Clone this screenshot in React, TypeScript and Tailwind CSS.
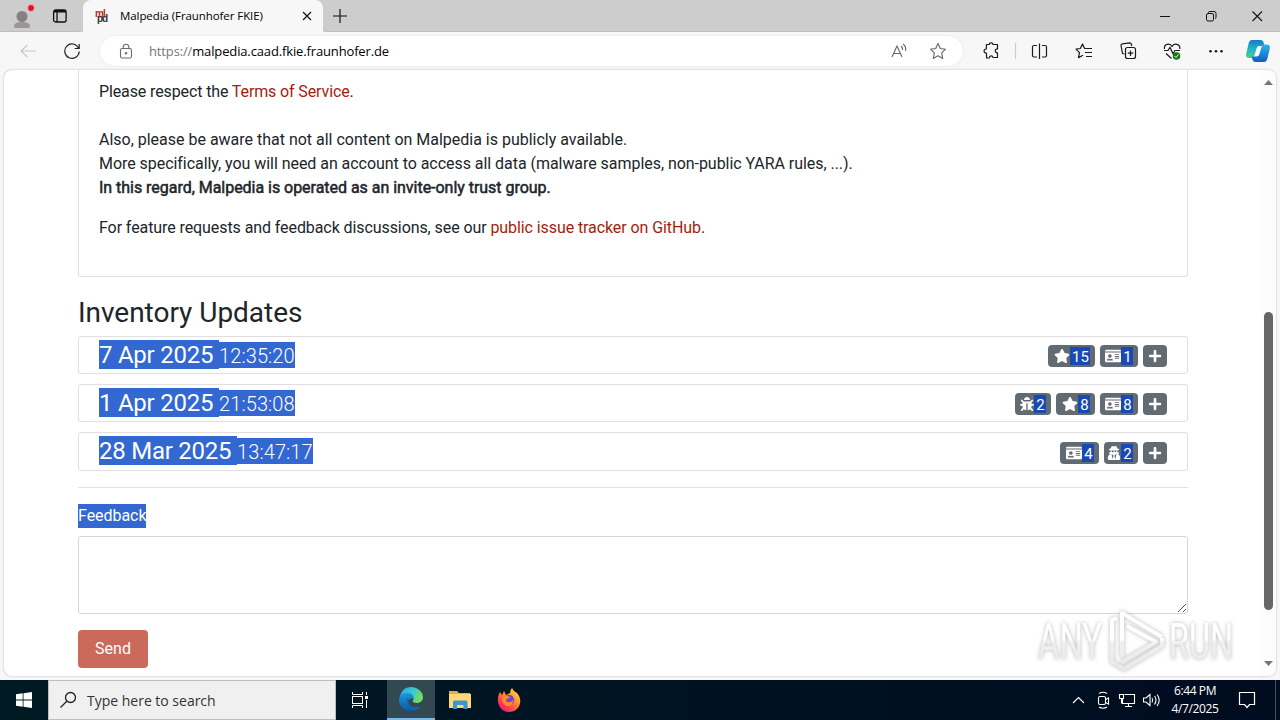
import React from "react";
import { FaBug, FaIdCard, FaPlus, FaStar, FaUserSecret } from "react-icons/fa";

type Badge = { icon: "star" | "card" | "bug" | "actor"; count: number; className: string };
type Update = { date: string; time: string; rowClass: string; dateClass: string; badgesClass: string; badges: Badge[] };

const badgeIcons = {
    star: <FaStar className="size-4" />,
    card: <FaIdCard className="size-4" />,
    bug: <FaBug className="size-3.5" />,
    actor: <FaUserSecret className="size-3.5" />,
};

const updates: Update[] = [
    {
        date: "7 Apr 2025",
        time: "12:35:20",
        rowClass: "h-[38px]",
        dateClass: "w-[120px]",
        badgesClass: "mt-2",
        badges: [
            { icon: "star", count: 15, className: "w-[47px]" },
            { icon: "card", count: 1, className: "w-[38px]" },
        ],
    },
    {
        date: "1 Apr 2025",
        time: "21:53:08",
        rowClass: "h-[38px]",
        dateClass: "w-[120px]",
        badgesClass: "mt-2",
        badges: [
            { icon: "bug", count: 2, className: "w-9" },
            { icon: "star", count: 8, className: "w-[39px]" },
            { icon: "card", count: 8, className: "w-[38px]" },
        ],
    },
    {
        date: "28 Mar 2025",
        time: "13:47:17",
        rowClass: "h-[39px]",
        dateClass: "w-[138px]",
        badgesClass: "mt-[9px]",
        badges: [
            { icon: "card", count: 4, className: "w-[39px]" },
            { icon: "actor", count: 2, className: "w-[34px]" },
        ],
    },
];

const TabStrip = () => (
    <div className="flex h-8 bg-[#cdcdcd]">
        <div className="flex w-[83px] items-center rounded-br-md border-b border-[#bdbdbd] pl-3">
            <svg className="h-6 w-6" viewBox="0 0 24 24">
                <circle cx="10" cy="12.500" r="5.500" fill="#858181" />
                <path d="M2 23c0-4 3-5 8-5s8 1 8 5c-2 3-14 3-16 0z" fill="#9b9797" />
                <circle cx="19" cy="4" r="3.400" fill="#e81123" stroke="#ddd" strokeWidth="0.6" />
            </svg>
            <svg className="ml-4 h-4 w-4" viewBox="0 0 16 16" fill="none" stroke="#111">
                <rect x="1.600" y="2" width="12.500" height="12" rx="2" strokeWidth="1.300" />
                <path d="M2 3.800h12M5 4v10" strokeWidth="1.300" />
                <path d="M2 3h12" strokeWidth="2" />
            </svg>
        </div>
        <div className="flex w-[240px] items-center rounded-t-lg bg-[#f7f7f7] pl-3">
            <div className="flex w-[14px] flex-col font-['Liberation_Sans'] text-[10px] leading-[5.500px] font-bold tracking-[-1px]">
                <span className="text-[#c0271d]">ml</span>
                <span className="pl-[2px] text-[#333]">pd</span>
            </div>
            <span className="ml-[11px] w-[180px] font-['Open_Sans'] text-[11.5px] tracking-[-0.08px] whitespace-nowrap text-black">
                Malpedia (Fraunhofer FKIE)
            </span>
            <svg className="ml-px size-3" viewBox="0 0 12 12" stroke="#111" strokeWidth="1.200">
                <path d="M2 2l8 8M10 2l-8 8" />
            </svg>
        </div>
        <div className="flex flex-1 items-center rounded-bl-md border-b border-[#bdbdbd] pl-[9px]">
            <svg className="size-4" viewBox="0 0 16 16" stroke="#111" strokeWidth="1.200">
                <path d="M8 1v14M1 8h14" />
            </svg>
            <svg className="mr-[5px] ml-auto h-4 w-[115px]" viewBox="0 0 115 16" fill="none" stroke="#111">
                <path d="M0 8.500h10" />
                <rect x="46.500" y="5.500" width="7" height="7.500" rx="1.500" />
                <path d="M48.500 5.500V4.500q0-1 1-1h4.500q2 0 2 2v4q0 1-1 1" />
                <path d="M92.500 3.500l9.500 9.500M102 3.500l-9.500 9.500" strokeWidth="1.100" />
            </svg>
        </div>
    </div>
);

const Toolbar = () => (
    <div className="flex h-[38px] items-center bg-[#f7f7f7]">
        <svg className="ml-5 h-4 w-4" viewBox="0 0 16 16" fill="none" stroke="#c8c8c8" strokeWidth="1.200">
            <path d="M16 8H1M7.500 2L1 8l6.500 6" />
        </svg>
        <svg className="ml-7 h-4 w-4" viewBox="0 0 16 16" fill="none" stroke="#222" strokeWidth="1.200">
            <path d="M14.500 5A7.200 7.200 0 1 0 15.200 8.500M15.200 1v4.500h-4.500" />
        </svg>
        <div className="ml-5 flex h-[30px] w-[863px] items-center rounded-full bg-white shadow-[0_0_2px_#ddd]">
            <svg className="ml-[19px] h-4 w-[14px]" viewBox="0 0 14 16" fill="none" stroke="#6b6b6b" strokeWidth="1.100">
                <rect x="1.500" y="5.500" width="11" height="9.500" rx="1.800" />
                <path d="M4.200 5.500V4a2.800 2.800 0 0 1 5.600 0v1.500" />
                <circle cx="7" cy="10.300" r=".7" fill="#6b6b6b" />
            </svg>
            <span className="mt-px ml-4 font-['Open_Sans'] text-[13px] tracking-[-0.14px] whitespace-nowrap text-[#777]">
                https://<span className="text-black">malpedia.caad.fkie.fraunhofer.de</span>
            </span>
            <svg className="ml-auto h-[18px] w-[18px]" viewBox="0 0 18 18" fill="none" stroke="#666" strokeWidth="1.100">
                <path d="M2 15L7 4l5 11M3.800 11.500h6.500M11 4q2 1.500 1.500 4M13 2q3.500 2.500 2.500 7" />
            </svg>
            <svg className="mr-4 ml-[21px] h-[18px] w-[18px]" viewBox="0 0 18 18" fill="none" stroke="#666" strokeWidth="1.100" strokeLinejoin="round">
                <path d="M9 1.500l2.300 5 5.200.7-3.800 3.700 1 5.500L9 13.700l-4.700 2.700 1-5.500L1.500 7.200l5.200-.7z" />
            </svg>
        </div>
        <svg className="h-[30px] flex-1" viewBox="963 36 317 30" fill="none" stroke="#1b1b1b" strokeWidth="1.200" strokeLinejoin="round">
            <path d="M986.500 44.500h2.700c0-2.300 3.800-2.300 3.800 0h4.500v4.500c-3-.4-3 4 0 3.800v4.700h-4.500c-.3-2.200-3.500-2.200-3.800.5h-2.700v-5c-3.200.3-3.200-4-.2-4z" />
            <path d="M1015.500 43v16" stroke="#ccc" />
            <path d="M1037 45.500h-3q-1.500 0-1.500 1.500v8.500q0 1.500 1.500 1.500h3M1042 45.500h3q1.500 0 1.500 1.500v8.500q0 1.500-1.500 1.500h-3M1039.500 43.500v15.500" />
            <path d="M1086 48.500l-1.500-.2-2-4.300-2.200 4.500-4.300.6 3.500 3.500-1 5 4.500-2.300M1086 48.500h6M1085 52.500h7M1086 56.500h6" />
            <path d="M1124.500 54l-2-.5-1.500-8q0-1.500 1.500-1.700l7-1q1.500 0 1.800 1.200l.5 2" />
            <rect x="1125.500" y="47.500" width="10" height="11" rx="2" />
            <path d="M1130.500 50.500v5.500M1127.800 53.200h5.500" />
            <path d="M1164.500 49c-1-5 5.500-6.500 7.500-2.500 2-4 8.500-2.500 7.800 2.500M1164 50.500h4l2-3.200 3 6.500 2-3.300h5M1166 53.500l5.500 5" />
            <circle cx="1176.500" cy="56" r="3.800" fill="#107c10" stroke="none" />
            <path d="M1174.500 56l1.500 1.500 2.500-3" stroke="#fff" strokeWidth=".9" />
            <g fill="#1b1b1b" stroke="none">
                <circle cx="1210.500" cy="51.200" r="1.300" />
                <circle cx="1216" cy="51.200" r="1.300" />
                <circle cx="1221.500" cy="51.200" r="1.300" />
            </g>
            <defs>
                <linearGradient id="copilotA" x1="0" y1="0" x2="0" y2="1">
                    <stop offset="0" stopColor="#1679c9" />
                    <stop offset=".5" stopColor="#20b5c8" />
                    <stop offset="1" stopColor="#55c98b" />
                </linearGradient>
                <linearGradient id="copilotB" x1="0" y1="0" x2="0" y2="1">
                    <stop offset="0" stopColor="#2cb8e6" />
                    <stop offset="1" stopColor="#1458c7" />
                </linearGradient>
            </defs>
            <g stroke="none">
                <path d="M1252 40h8.500q2.500 0 3.200 3l.8 3h-5q-2 0-2.700 2l-2.300 7.500q-.8 2.500-3 2.500h-2q-4.500 0-3.200-4.500l2.200-9.500q.8-4 3.500-4z" fill="url(#copilotA)" />
                <path d="M1264 62h-8.500q-2.500 0-3.200-3l-.8-2.500h5q2 0 2.700-2l2.300-7.500q.8-2.500 3-2.500h2q4.500 0 3.200 4.500l-2.200 9q-.8 4-3.500 4z" fill="url(#copilotB)" />
                <path d="M1257.500 46.500h4l-3 9h-4z" fill="#f2f9fb" />
            </g>
        </svg>
    </div>
);

const BadgeItem = ({ icon, count, className }: Badge) => (
    <div className={"flex h-[22px] items-center justify-end rounded bg-[#636b72] pr-[5px] text-white " + className}>
        {badgeIcons[icon]}
        <span className={"h-[18px] bg-[#1b49b3] pl-px text-center text-[15px] leading-[20px] " + (count > 9 ? "w-5" : "w-3")}>{count}</span>
    </div>
);

const UpdateRow = ({ date, time, rowClass, dateClass, badgesClass, badges }: Update) => (
    <div className={"flex rounded-[3px] border border-[#dfdfdf] px-5 " + rowClass}>
        <div className="mt-[3px] flex text-white">
            <span className={"h-[29px] bg-[#3367d1] text-2xl leading-[30px] tracking-[-0.25px] whitespace-nowrap " + dateClass}>{date}</span>
            <span className="mt-0.5 h-[26px] w-[76px] bg-[#3367d1] text-[20px] leading-[29px] font-light tracking-[0.1px] whitespace-nowrap">{time}</span>
        </div>
        <div className={"ml-auto flex gap-[5px] " + badgesClass}>
            {badges.map((badge) => (
                <BadgeItem key={badge.icon} {...badge} />
            ))}
            <div className="flex h-[22px] w-6 items-center justify-center rounded bg-[#636b72] text-white">
                <FaPlus className="size-3.5" />
            </div>
        </div>
    </div>
);

const Watermark = () => (
    <svg className="absolute top-[536px] left-[1026px] h-[70px] w-[214px] overflow-visible" viewBox="1030 606 214 70">
        <defs>
            <linearGradient id="markFade" gradientUnits="userSpaceOnUse" x1="0" y1="610" x2="0" y2="672">
                <stop offset=".48" stopColor="#fff" />
                <stop offset=".52" stopColor="#f0f0f0" />
                <stop offset="1" stopColor="#e8e8e8" />
            </linearGradient>
        </defs>
        <g className="[filter:drop-shadow(0_0_2px_#b8b8b8)]" fill="url(#markFade)" fontFamily="Roboto" fontSize="50" fontWeight="400">
            <text x="1038" y="659" textLength="64" lengthAdjust="spacingAndGlyphs">
                ANY
            </text>
            <text x="1169" y="659" textLength="64" lengthAdjust="spacingAndGlyphs">
                RUN
            </text>
            <g fill="none" stroke="url(#markFade)" strokeWidth="4" strokeLinejoin="round">
                <path d="M1117 618l-5 2v42l5 2" />
                <path d="M1122 657v-44l40 24" />
                <path d="M1127 626l29 16-34 20" />
                <path d="M1117 665l7 4 38-23v-8" />
            </g>
        </g>
    </svg>
);

const Page = () => (
    <div className="relative mx-1 h-[606px] overflow-hidden rounded-lg bg-white font-[Roboto] text-base text-[#212529] shadow-[0_0_2px_#aaa]">
        <div className="ml-[74px] w-[1110px]">
            <div className="h-[207px] rounded-b-[3px] border border-t-0 border-[#dfdfdf] px-5 pt-[10px]">
                <p className="tracking-[-0.12px]">
                    Please respect the <span className="text-[#a61c0c]">Terms of Service</span>.
                </p>
                <p className="mt-6 tracking-[-0.01px]">Also, please be aware that not all content on Malpedia is publicly available.</p>
                <p className="tracking-[-0.047px]">
                    More specifically, you will need an account to access all data (malware samples, non-public YARA rules, ...).
                </p>
                <p className="tracking-[-0.03px] [-webkit-text-stroke:0.500px_#212529]">
                    In this regard, Malpedia is operated as an invite-only trust group.
                </p>
                <p className="mt-4 tracking-[-0.085px]">
                    For feature requests and feedback discussions, see our <span className="text-[#a61c0c]">public issue tracker on GitHub</span>.
                </p>
            </div>
            <h3 className="mt-[19px] h-10 text-[28px] leading-[34px] tracking-[-0.03px]">Inventory Updates</h3>
            <div className="flex flex-col gap-2.5">
                {updates.map((update) => (
                    <UpdateRow key={update.date} {...update} />
                ))}
            </div>
            <hr className="mt-4 border-[#e2e2e2]" />
            <div className="mt-4 flex">
                <span className="h-6 w-[68px] bg-[#3367d1] tracking-[-0.05px] whitespace-nowrap text-white">Feedback</span>
            </div>
            <div className="mt-2 flex h-[78px] items-end justify-end rounded-[3px] border border-[#d3d6d9]">
                <svg className="size-2.5" viewBox="0 0 10 10" stroke="#555">
                    <path d="M1 9l8-8M6 9l3-3" />
                </svg>
            </div>
            <div className="mt-4 flex h-[38px] w-[70px] items-center justify-center rounded bg-[#cb6a5b] text-white">Send</div>
        </div>
        <div className="absolute top-0 right-0 flex h-full w-[15px] flex-col items-center bg-[#fcfcfc]">
            <svg className="mt-[10px] h-[5px] w-[9px]" viewBox="0 0 9 5" fill="#777">
                <path d="M4.500 0L9 5H0z" />
            </svg>
            <div className="mt-[227px] h-[298px] w-[9px] rounded-full bg-[#666]" />
            <svg className="mt-[51px] h-[5px] w-[9px]" viewBox="0 0 9 5" fill="#777">
                <path d="M0 0h9L4.500 5z" />
            </svg>
        </div>
        <Watermark />
    </div>
);

const Taskbar = () => (
    <div className="mt-1 flex h-10 bg-gradient-to-r from-[#001a23] to-[#000c20]">
        <div className="flex w-12 items-center justify-center">
            <svg className="size-4" viewBox="0 0 16 16" fill="#fff">
                <path d="M0 2.300L6.700 1.300v6.300H0zM7.500 1.200L16 0v7.600H7.500zM0 8.400h6.700v6.300L0 13.700zM7.500 8.400H16V16l-8.500-1.200z" />
            </svg>
        </div>
        <div className="flex w-[288px] items-center border border-[#bdbdbd] bg-[#f0f0f0] pl-[10px]">
            <svg className="size-[18px]" viewBox="0 0 18 18" fill="none" stroke="#222" strokeWidth="1.300">
                <circle cx="11.500" cy="6.500" r="5" />
                <path d="M8 10l-6.500 6.500" />
            </svg>
            <span className="ml-[10px] font-['Open_Sans'] text-[14px] tracking-[-0.01px] whitespace-nowrap text-[#333]">Type here to search</span>
        </div>
        <div className="flex w-[51px] items-center pl-4">
            <svg className="h-4 w-4" viewBox="0 0 16 16" fill="none" stroke="#fff">
                <path d="M.5 0v2.500h10V0M.5 16v-2.500h10V16M14.500 0v3M14.500 8v8" />
                <rect x=".5" y="4.500" width="10" height="7" />
                <path d="M13 5.500h3" strokeWidth="3" />
            </svg>
        </div>
        <div className="flex w-12 items-center justify-center border-b-2 border-[#76b9ed] bg-[#334951]">
            <svg className="size-6" viewBox="0 0 24 24">
                <defs>
                    <linearGradient id="edgeTop" x1="0" y1="0" x2="1" y2=".4">
                        <stop offset="0" stopColor="#2aa8dc" />
                        <stop offset=".5" stopColor="#33c4dc" />
                        <stop offset="1" stopColor="#72dc64" />
                    </linearGradient>
                    <linearGradient id="edgeBody" x1="0" y1="0" x2="0" y2="1">
                        <stop offset="0" stopColor="#1a98dc" />
                        <stop offset="1" stopColor="#0b59a5" />
                    </linearGradient>
                </defs>
                <path d="M1 10C2 4 6 0 12 0s12 4.500 12 10c0 4-3 6-6.500 6-3 0-4.500-1.200-4-2 2.500-3 0-6-4-6-4.500 0-7.500 3-8.500 6z" fill="url(#edgeTop)" />
                <path d="M0 13c0-5 4-7 8.500-7 4 0 7 3 6 6-4-2-7 2-5 6 1.500 3 6 4.500 12 1.500C19 23 16 24 12 24 5 24 0 19 0 13z" fill="url(#edgeBody)" />
                <path d="M8 11c-2 5 1 11 8 11.500 2-.5 4-1.500 5.500-3-5 2-9 1-11-1.500-1.500-2-1.500-4-.5-6z" fill="#1267b8" />
                <path d="M14.500 12c-1 1.500-1.500 2.500-.5 3.200 2 1.300 5 1 7 .3-2 2-8 3-10 .5-1-2 .5-4 3.500-4z" fill="#334951" />
            </svg>
        </div>
        <div className="flex w-[49px] items-center justify-center">
            <svg className="h-5 w-[22px]" viewBox="0 0 22 20">
                <path d="M0 1h8l2 2h11v15H0z" fill="#e8a93d" />
                <path d="M0 4h22v14H0z" fill="#ffd977" />
                <path d="M4 19v-7q0-1.500 1.500-1.500h11.500q1.500 0 1.500 1.500v7h-4v-4h-6.500v4z" fill="#3f94cd" />
            </svg>
        </div>
        <div className="flex w-[50px] items-center justify-center">
            <svg className="size-6" viewBox="0 0 24 24">
                <defs>
                    <linearGradient id="fox" x1="1" y1="0" x2=".2" y2="1">
                        <stop offset="0" stopColor="#fff44f" />
                        <stop offset=".4" stopColor="#ff9a2b" />
                        <stop offset=".75" stopColor="#ff4050" />
                        <stop offset="1" stopColor="#e31587" />
                    </linearGradient>
                </defs>
                <path d="M3 4l2 3 2-4 2 4 4-2q0-3 2-5 1 3 5 5c7 8 2 19-8 19S-2 12 3 4z" fill="url(#fox)" />
                <circle cx="12" cy="12" r="5.200" fill="#7542d8" />
                <path d="M5 8c3-2 6 0 8 1-1 2-4 1.500-4 3.500s5 2.500 7-.5c0 5-3 6-5.500 6S4 15 5 8z" fill="#ff8a2b" />
            </svg>
        </div>
        <svg className="ml-auto h-10 w-[100px]" viewBox="1070 680 100 40" fill="none" stroke="#fff" strokeWidth="1.100">
            <path d="M1073 703l5.500-5.500 5.500 5.500" />
            <rect x="1098.500" y="696.500" width="7" height="8" rx="1.500" />
            <path d="M1105.500 699.500l3-1.500v6l-3-1.500M1099 693.500q4-2.500 8 0M1099 707q4 2.500 8 0" />
            <path d="M1124.500 694.500h10v9h-12v-4.500M1128.500 703.500v3M1125 706.500h7M1119.500 694.500h4v4h-4zM1121.500 698.500v5" />
            <path d="M1143.500 698h2.500l4-3.500v11l-4-3.500h-2.500zM1152 698q1.500 2 0 4.500M1154.500 696q3 4 0 8.500M1157 694.500q4.500 5.500 0 11.500" />
        </svg>
        <div className="flex w-[50px] flex-col items-center justify-center gap-[2px] font-['Open_Sans'] text-[12px] leading-4 tracking-[-0.4px] whitespace-nowrap text-white">
            <span>6:44 PM</span>
            <span>4/7/2025</span>
        </div>
        <svg className="h-10 w-[60px]" viewBox="1220 680 60 40" fill="none" stroke="#fff" strokeWidth="1.200">
            <path d="M1239.500 692.500h15v12h-5l-2.500 3-2.500-3h-5z" />
            <path d="M1275.500 680v40" stroke="#415060" strokeWidth="1" />
        </svg>
    </div>
);

const App = () => (
    <div className="h-[720px] w-[1280px] overflow-hidden bg-[#f7f7f7]">
        <TabStrip />
        <Toolbar />
        <Page />
        <Taskbar />
    </div>
);

export default App;
